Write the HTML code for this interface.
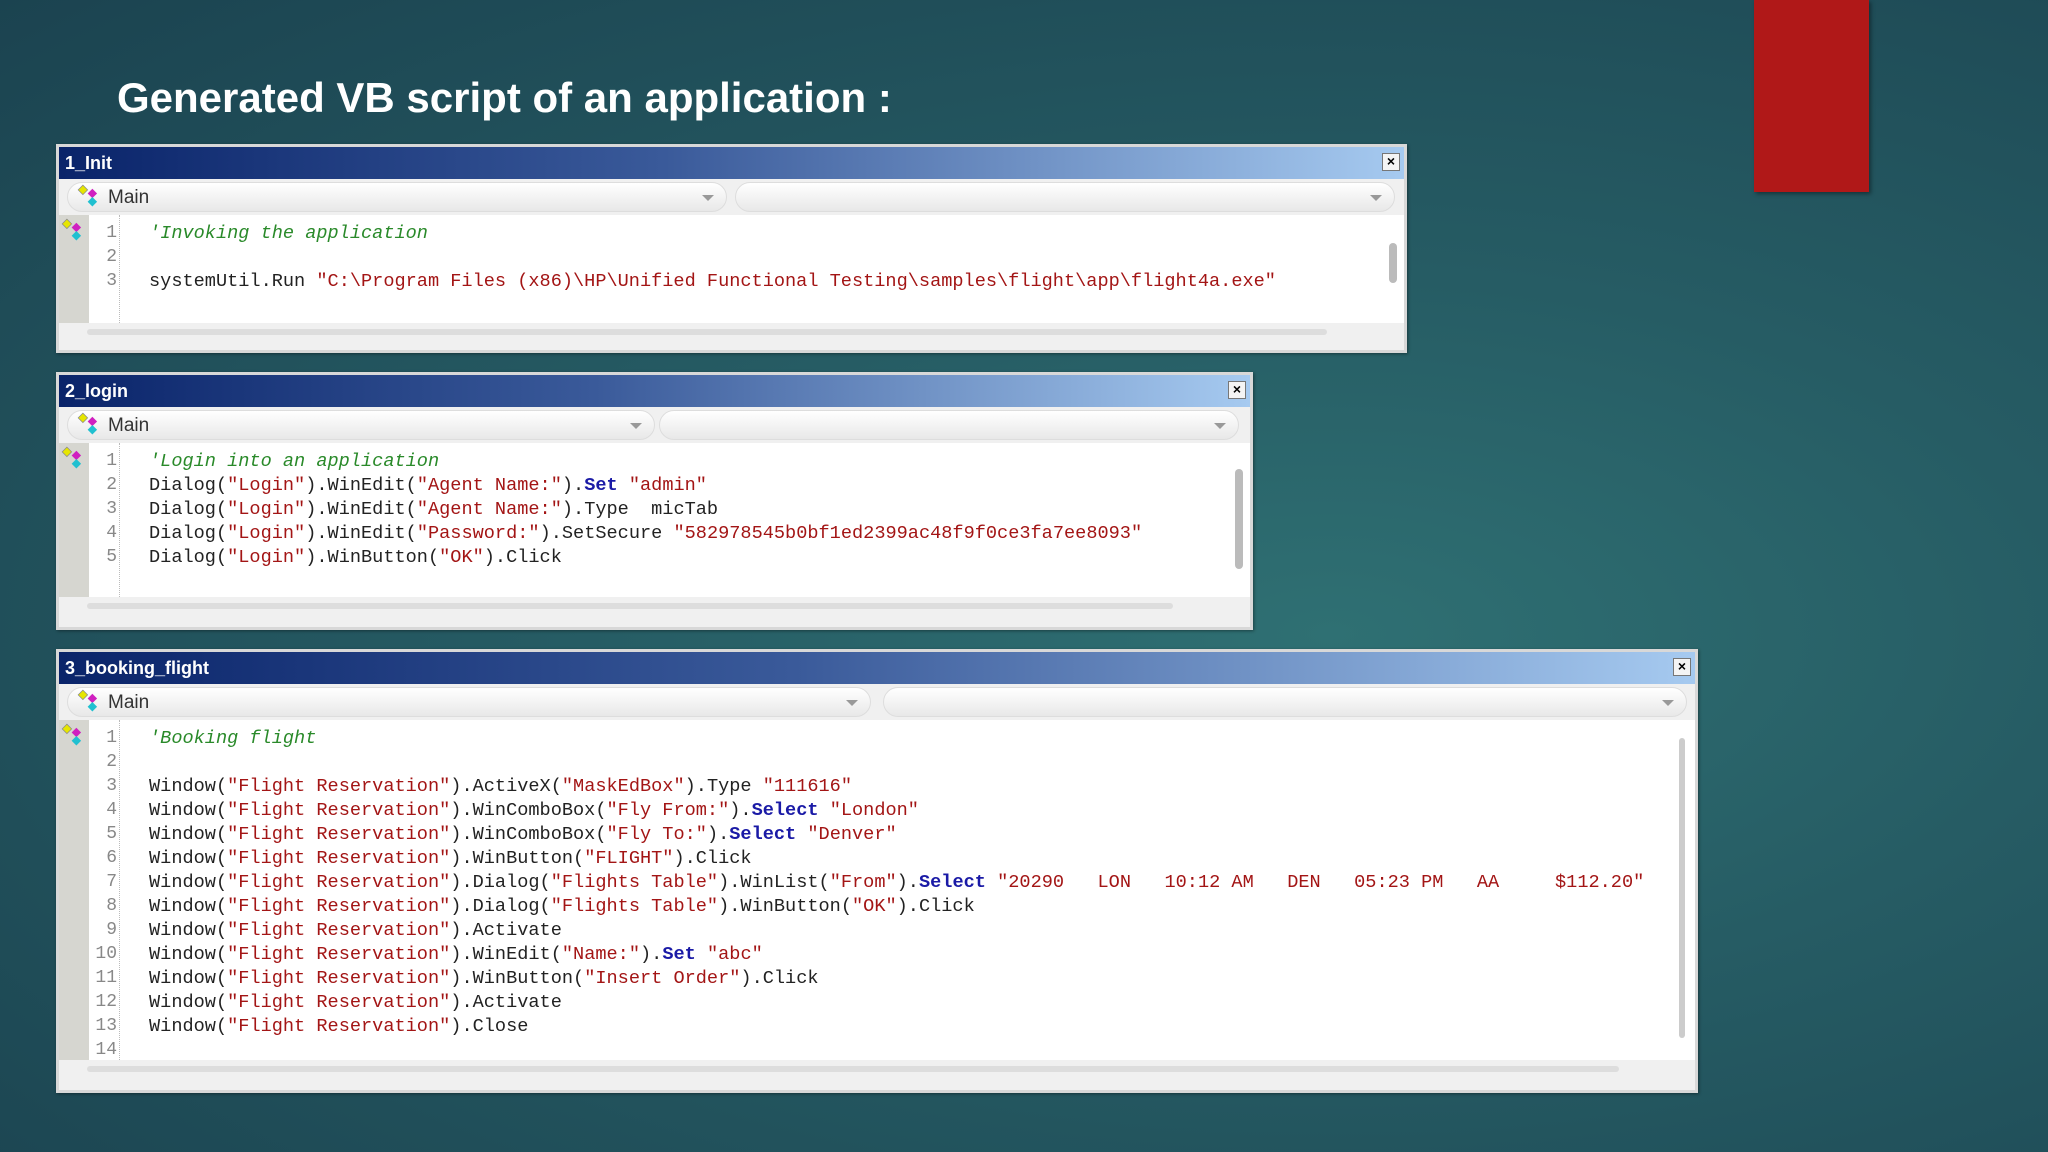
<!DOCTYPE html>
<html><head><meta charset="utf-8"><style>
body{margin:0;width:2048px;height:1152px;overflow:hidden;position:relative;
background:radial-gradient(ellipse at 65% 55%,#2f7073 0%,#265c64 40%,#1b4350 100%);font-family:"Liberation Sans",sans-serif}
.h{position:absolute;left:117px;top:74px;color:#fff;font-weight:bold;font-size:42px}
.red{position:absolute;left:1754px;top:0;width:115px;height:192px;background:#b01818;box-shadow:2px 2px 4px rgba(0,0,0,.4)}
.w{position:absolute;background:#f0f0f0;border:3px solid #d8d8d8;box-shadow:1px 1px 3px rgba(0,0,0,.4)}
.tb{position:absolute;left:0;right:0;top:0;height:32px;background:linear-gradient(90deg,#0a246a,#3a5a9a 45%,#a6caf0);color:#fff;font:bold 18px "Liberation Sans",sans-serif;line-height:32px;padding-left:6px;box-sizing:border-box}
.x{position:absolute;right:4px;top:6px;width:16px;height:16px;background:#f4f4f4;border:1px solid #777;color:#000;font:bold 14px/15px "Liberation Sans";text-align:center}
.cb{position:absolute;top:35px;height:30px;background:linear-gradient(#fff,#e8e8e8);border-radius:15px;border:1px solid #ddd;font:19px/30px "Liberation Sans",sans-serif;color:#333;box-sizing:border-box}
.cb .a{position:absolute;right:12px;top:12px;border:6px solid transparent;border-top:6px solid #999}
.ed{position:absolute;left:0;right:0;background:#fff}
.gut{position:absolute;left:0;top:0;bottom:0;width:30px;background:#d6d6d0}
.ln{position:absolute;left:30px;width:28px;text-align:right;color:#888;font:18px "Liberation Mono",monospace;margin-top:6px}
.dv{position:absolute;left:60px;top:0;bottom:0;border-left:1px dotted #bbb}
.c{position:absolute;left:90px;white-space:pre;font:18.6px "Liberation Mono",monospace;color:#222;margin-top:6px}
.s{color:#a31515}.k{color:#1a1aa6;font-weight:bold}.cm{color:#2a8a2a;font-style:italic}
.hs{position:absolute;left:0;height:18px;background:#f0f0f0}
.hs i{position:absolute;left:28px;right:50px;top:6px;height:6px;background:#ddd;border-radius:3px}
.vs{position:absolute;width:8px;background:#bbb;border-radius:4px}
.ic{position:absolute;width:26px;height:26px}
</style></head><body>
<div class="h">Generated VB script of an application :</div>
<div class="red"></div>

<!-- window1 -->
<div class="w" style="left:56px;top:144px;width:1345px;height:203px">
<div class="tb">1_Init<div class="x">×</div></div>
<div class="cb" style="left:8px;width:660px;padding-left:40px">Main<div class="a"></div></div>
<div class="cb" style="left:676px;width:660px"><div class="a"></div></div>
<svg class="ic" style="left:18px;top:37px" viewBox="0 0 22 22"><path d="M5 1l4 4-4 4-4-4z" fill="#e6e600" stroke="#888" stroke-width=".6"/><path d="M13 4l4 4-4 4-4-4z" fill="#d020c0"/><path d="M13 11l4 4-4 4-4-4z" fill="#20c0d0"/></svg>
<div class="ed" style="top:68px;height:108px">
<div class="gut"></div><div class="dv"></div>
<svg class="ic" style="left:2px;top:3px" viewBox="0 0 22 22"><path d="M5 1l4 4-4 4-4-4z" fill="#e6e600" stroke="#888" stroke-width=".6"/><path d="M13 4l4 4-4 4-4-4z" fill="#d020c0"/><path d="M13 11l4 4-4 4-4-4z" fill="#20c0d0"/></svg>
<div class="ln" style="top:2px">1</div><div class="ln" style="top:26px">2</div><div class="ln" style="top:50px">3</div>
<div class="c cm" style="top:2px">'Invoking the application</div>
<div class="c" style="top:50px">systemUtil.Run <span class="s">"C:\Program Files (x86)\HP\Unified Functional Testing\samples\flight\app\flight4a.exe"</span></div>
<div class="vs" style="left:1330px;top:28px;height:40px"></div>
</div>
<div class="hs" style="top:176px;width:1318px"><i></i></div>
</div>

<!-- window2 -->
<div class="w" style="left:56px;top:372px;width:1191px;height:252px">
<div class="tb">2_login<div class="x">×</div></div>
<div class="cb" style="left:8px;width:588px;padding-left:40px">Main<div class="a"></div></div>
<div class="cb" style="left:600px;width:580px"><div class="a"></div></div>
<svg class="ic" style="left:18px;top:37px" viewBox="0 0 22 22"><path d="M5 1l4 4-4 4-4-4z" fill="#e6e600" stroke="#888" stroke-width=".6"/><path d="M13 4l4 4-4 4-4-4z" fill="#d020c0"/><path d="M13 11l4 4-4 4-4-4z" fill="#20c0d0"/></svg>
<div class="ed" style="top:68px;height:154px">
<div class="gut"></div><div class="dv"></div>
<svg class="ic" style="left:2px;top:3px" viewBox="0 0 22 22"><path d="M5 1l4 4-4 4-4-4z" fill="#e6e600" stroke="#888" stroke-width=".6"/><path d="M13 4l4 4-4 4-4-4z" fill="#d020c0"/><path d="M13 11l4 4-4 4-4-4z" fill="#20c0d0"/></svg>
<div class="ln" style="top:2px">1</div><div class="ln" style="top:26px">2</div><div class="ln" style="top:50px">3</div><div class="ln" style="top:74px">4</div><div class="ln" style="top:98px">5</div>
<div class="c cm" style="top:2px">'Login into an application</div>
<div class="c" style="top:26px">Dialog(<span class="s">"Login"</span>).WinEdit(<span class="s">"Agent Name:"</span>).<span class="k">Set</span> <span class="s">"admin"</span></div>
<div class="c" style="top:50px">Dialog(<span class="s">"Login"</span>).WinEdit(<span class="s">"Agent Name:"</span>).Type  micTab</div>
<div class="c" style="top:74px">Dialog(<span class="s">"Login"</span>).WinEdit(<span class="s">"Password:"</span>).SetSecure <span class="s">"582978545b0bf1ed2399ac48f9f0ce3fa7ee8093"</span></div>
<div class="c" style="top:98px">Dialog(<span class="s">"Login"</span>).WinButton(<span class="s">"OK"</span>).Click</div>
<div class="vs" style="left:1176px;top:26px;height:100px"></div>
</div>
<div class="hs" style="top:222px;width:1164px"><i></i></div>
</div>

<!-- window3 -->
<div class="w" style="left:56px;top:649px;width:1636px;height:438px">
<div class="tb">3_booking_flight<div class="x">×</div></div>
<div class="cb" style="left:8px;width:804px;padding-left:40px">Main<div class="a"></div></div>
<div class="cb" style="left:824px;width:804px"><div class="a"></div></div>
<svg class="ic" style="left:18px;top:37px" viewBox="0 0 22 22"><path d="M5 1l4 4-4 4-4-4z" fill="#e6e600" stroke="#888" stroke-width=".6"/><path d="M13 4l4 4-4 4-4-4z" fill="#d020c0"/><path d="M13 11l4 4-4 4-4-4z" fill="#20c0d0"/></svg>
<div class="ed" style="top:68px;height:340px">
<div class="gut"></div><div class="dv"></div>
<svg class="ic" style="left:2px;top:3px" viewBox="0 0 22 22"><path d="M5 1l4 4-4 4-4-4z" fill="#e6e600" stroke="#888" stroke-width=".6"/><path d="M13 4l4 4-4 4-4-4z" fill="#d020c0"/><path d="M13 11l4 4-4 4-4-4z" fill="#20c0d0"/></svg>
<div class="ln" style="top:2px">1</div><div class="ln" style="top:26px">2</div><div class="ln" style="top:50px">3</div><div class="ln" style="top:74px">4</div><div class="ln" style="top:98px">5</div><div class="ln" style="top:122px">6</div><div class="ln" style="top:146px">7</div><div class="ln" style="top:170px">8</div><div class="ln" style="top:194px">9</div><div class="ln" style="top:218px">10</div><div class="ln" style="top:242px">11</div><div class="ln" style="top:266px">12</div><div class="ln" style="top:290px">13</div><div class="ln" style="top:314px">14</div>
<div class="c cm" style="top:2px">'Booking flight</div>
<div class="c" style="top:50px">Window(<span class="s">"Flight Reservation"</span>).ActiveX(<span class="s">"MaskEdBox"</span>).Type <span class="s">"111616"</span></div>
<div class="c" style="top:74px">Window(<span class="s">"Flight Reservation"</span>).WinComboBox(<span class="s">"Fly From:"</span>).<span class="k">Select</span> <span class="s">"London"</span></div>
<div class="c" style="top:98px">Window(<span class="s">"Flight Reservation"</span>).WinComboBox(<span class="s">"Fly To:"</span>).<span class="k">Select</span> <span class="s">"Denver"</span></div>
<div class="c" style="top:122px">Window(<span class="s">"Flight Reservation"</span>).WinButton(<span class="s">"FLIGHT"</span>).Click</div>
<div class="c" style="top:146px">Window(<span class="s">"Flight Reservation"</span>).Dialog(<span class="s">"Flights Table"</span>).WinList(<span class="s">"From"</span>).<span class="k">Select</span> <span class="s">"20290   LON   10:12 AM   DEN   05:23 PM   AA     $112.20"</span></div>
<div class="c" style="top:170px">Window(<span class="s">"Flight Reservation"</span>).Dialog(<span class="s">"Flights Table"</span>).WinButton(<span class="s">"OK"</span>).Click</div>
<div class="c" style="top:194px">Window(<span class="s">"Flight Reservation"</span>).Activate</div>
<div class="c" style="top:218px">Window(<span class="s">"Flight Reservation"</span>).WinEdit(<span class="s">"Name:"</span>).<span class="k">Set</span> <span class="s">"abc"</span></div>
<div class="c" style="top:242px">Window(<span class="s">"Flight Reservation"</span>).WinButton(<span class="s">"Insert Order"</span>).Click</div>
<div class="c" style="top:266px">Window(<span class="s">"Flight Reservation"</span>).Activate</div>
<div class="c" style="top:290px">Window(<span class="s">"Flight Reservation"</span>).Close</div>
<div class="vs" style="left:1620px;top:18px;height:300px;width:6px;background:#ccc"></div>
</div>
<div class="hs" style="top:408px;width:1610px"><i></i></div>
</div>
</body></html>
